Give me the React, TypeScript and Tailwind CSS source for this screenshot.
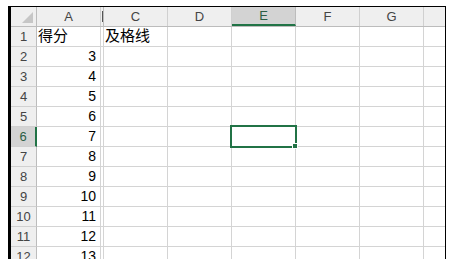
const cols = ["A", "B", "C", "D", "E", "F", "G", ""];
const widths = ["w-[64px]", "w-[3px]", "w-[64px]", "w-[64px]", "w-[64px]", "w-[64px]", "w-[64px]", "w-[21px]"];

const rows: { n: number; a: string; c: string }[] = [
  { n: 1, a: "得分", c: "及格线" },
  ...[3, 4, 5, 6, 7, 8, 9, 10, 11, 12, 13].map((v, i) => ({ n: i + 2, a: String(v), c: "" })),
];

const font = { fontFamily: '"Liberation Sans", "Noto Sans CJK SC", sans-serif' };

export default function App() {
  return (
    <div className="w-[474px] h-[259px] overflow-hidden bg-white pl-[8px] pt-[6px]" style={font}>
      <div className="w-[438px] border-l-[3px] border-t border-r border-black">
        {/* column headers */}
        <div className="flex h-[20px] bg-[#efefef] border-b border-[#bcbcbc]">
          <div className="relative w-[26px] border-r border-[#bcbcbc]">
            <svg className="absolute right-[3px] bottom-[3px]" width="11" height="11" viewBox="0 0 11 11">
              <polygon points="11,0 11,11 0,11" fill="#c6c6c6" />
            </svg>
          </div>
          {cols.map((c, i) =>
            c === "B" ? (
              <div key={i} className="w-[3px] flex items-center justify-center border-r border-[#bcbcbc]">
                <div className="w-px h-[11px] bg-[#555]" />
              </div>
            ) : (
              <div
                key={i}
                className={`${widths[i]} flex items-center justify-center text-[13px] border-r ${
                  c === "E"
                    ? "bg-[#d3d3d3] text-[#2b5e45] border-b-2 border-b-[#217346] border-r-[#bcbcbc]"
                    : "text-[#444] border-[#d0d0d0]"
                } ${i === cols.length - 1 ? "border-r-0" : ""}`}
              >
                {c}
              </div>
            )
          )}
        </div>
        {rows.map((r) => (
          <div key={r.n} className="flex h-[20px]">
            <div
              className={`w-[26px] flex items-center justify-center text-[13px] border-b border-[#d0d0d0] ${
                r.n === 6
                  ? "bg-[#d3d3d3] text-[#2b5e45] border-r-2 border-r-[#217346]"
                  : "bg-[#efefef] text-[#444] border-r border-r-[#bcbcbc]"
              }`}
            >
              {r.n}
            </div>
            {cols.map((c, i) => (
              <div
                key={i}
                className={`relative ${widths[i]} border-b border-r border-[#d4d4d4] text-[14px] text-black flex items-center ${
                  c === "A" ? "justify-end pr-[4px]" : "pl-[2px]"
                } ${i === cols.length - 1 ? "border-r-0" : ""}`}
              >
                {c === "A" && r.n === 1 ? <span className="absolute left-[1px] text-[15px]">{r.a}</span> : c === "A" ? r.a : null}
                {c === "C" && r.c ? <span className="absolute left-[1px] text-[15px] whitespace-nowrap">{r.c}</span> : null}
                {c === "E" && r.n === 6 ? (
                  <div className="absolute -left-[2px] -top-[2px] -right-[2px] -bottom-[2px] border-2 border-[#217346] z-10">
                    <div className="absolute -right-[3px] -bottom-[3px] w-[6px] h-[6px] bg-[#217346] border border-white" />
                  </div>
                ) : null}
              </div>
            ))}
          </div>
        ))}
      </div>
    </div>
  );
}
